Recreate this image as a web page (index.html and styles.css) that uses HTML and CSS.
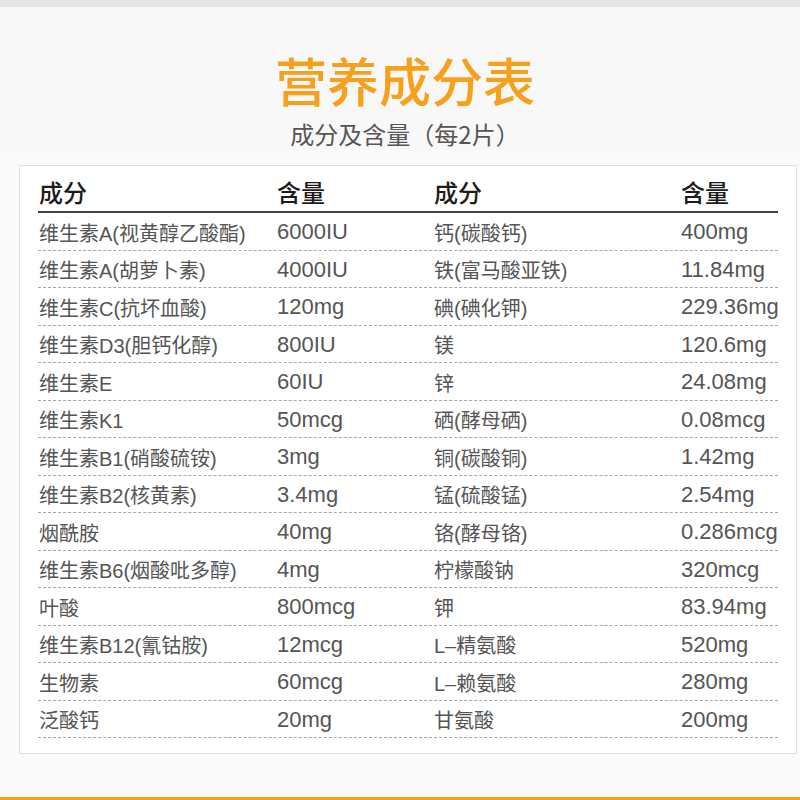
FILE: index.html
```html
<!DOCTYPE html>
<html lang="zh-CN">
<head>
<meta charset="utf-8">
<title>营养成分表</title>
<link rel="stylesheet" href="styles.css">
</head>
<body>
<div class="topbar"></div>
<header class="head">
  <h1 class="title">营养成分表</h1>
  <p class="subtitle">成分及含量（每2片）</p>
</header>
<main class="main">
  <section class="card">
    <div class="row row-head">
      <span>成分</span><span>含量</span><span>成分</span><span>含量</span>
    </div>
    <div class="row"><span>维生素A(视黄醇乙酸酯)</span><span class="val">6000IU</span><span>钙(碳酸钙)</span><span class="val">400mg</span></div>
    <div class="row"><span>维生素A(胡萝卜素)</span><span class="val">4000IU</span><span>铁(富马酸亚铁)</span><span class="val">11.84mg</span></div>
    <div class="row"><span>维生素C(抗坏血酸)</span><span class="val">120mg</span><span>碘(碘化钾)</span><span class="val">229.36mg</span></div>
    <div class="row"><span>维生素D3(胆钙化醇)</span><span class="val">800IU</span><span>镁</span><span class="val">120.6mg</span></div>
    <div class="row"><span>维生素E</span><span class="val">60IU</span><span>锌</span><span class="val">24.08mg</span></div>
    <div class="row"><span>维生素K1</span><span class="val">50mcg</span><span>硒(酵母硒)</span><span class="val">0.08mcg</span></div>
    <div class="row"><span>维生素B1(硝酸硫铵)</span><span class="val">3mg</span><span>铜(碳酸铜)</span><span class="val">1.42mg</span></div>
    <div class="row"><span>维生素B2(核黄素)</span><span class="val">3.4mg</span><span>锰(硫酸锰)</span><span class="val">2.54mg</span></div>
    <div class="row"><span>烟酰胺</span><span class="val">40mg</span><span>铬(酵母铬)</span><span class="val">0.286mcg</span></div>
    <div class="row"><span>维生素B6(烟酸吡多醇)</span><span class="val">4mg</span><span>柠檬酸钠</span><span class="val">320mcg</span></div>
    <div class="row"><span>叶酸</span><span class="val">800mcg</span><span>钾</span><span class="val">83.94mg</span></div>
    <div class="row"><span>维生素B12(氰钴胺)</span><span class="val">12mcg</span><span>L–精氨酸</span><span class="val">520mg</span></div>
    <div class="row"><span>生物素</span><span class="val">60mcg</span><span>L–赖氨酸</span><span class="val">280mg</span></div>
    <div class="row"><span>泛酸钙</span><span class="val">20mg</span><span>甘氨酸</span><span class="val">200mg</span></div>
  </section>
</main>
<div class="bottombar"></div>
</body>
</html>
```

FILE: styles.css
```css
* { box-sizing: border-box; }

html, body {
  margin: 0;
  padding: 0;
  background: #fafafa;
  font-family: "Liberation Sans", "Noto Sans CJK SC", sans-serif;
}

.topbar {
  height: 7px;
  background: #e4e4e4;
}

.head {
  background: #f8f8f8;
  padding: 42px 0 1px 10px;
  text-align: center;
}

.title {
  margin: 0;
  font-size: 52px;
  line-height: 62px;
  font-weight: 500;
  color: #f8a01c;
  font-family: "Noto Sans CJK SC", sans-serif;
}

.subtitle {
  margin: 8px 0 0;
  font-size: 24px;
  line-height: 30px;
  color: #555;
  font-family: "Noto Sans CJK SC", sans-serif;
}

.main {
  padding: 15px 3px 43px 19px;
}

.card {
  background: #fff;
  border: 1px solid #dedede;
  padding: 0 18px 15px 18px;
}

.row {
  display: grid;
  grid-template-columns: 238px 157px 247px 1fr;
  align-items: center;
  height: 37.5px;
  border-bottom: 1px dashed #a8a8a8;
  font-size: 20px;
  color: #555;
  padding-left: 1px;
  padding-top: 2px;
}

.val {
  font-size: 22px;
}

.row-head {
  height: 47px;
  border-bottom: 2px solid #444;
  font-size: 24px;
  font-weight: 500;
  color: #1c1c1c;
  padding-top: 6px;
}

.bottombar {
  height: 6px;
  background: #f9a01b;
}
```
